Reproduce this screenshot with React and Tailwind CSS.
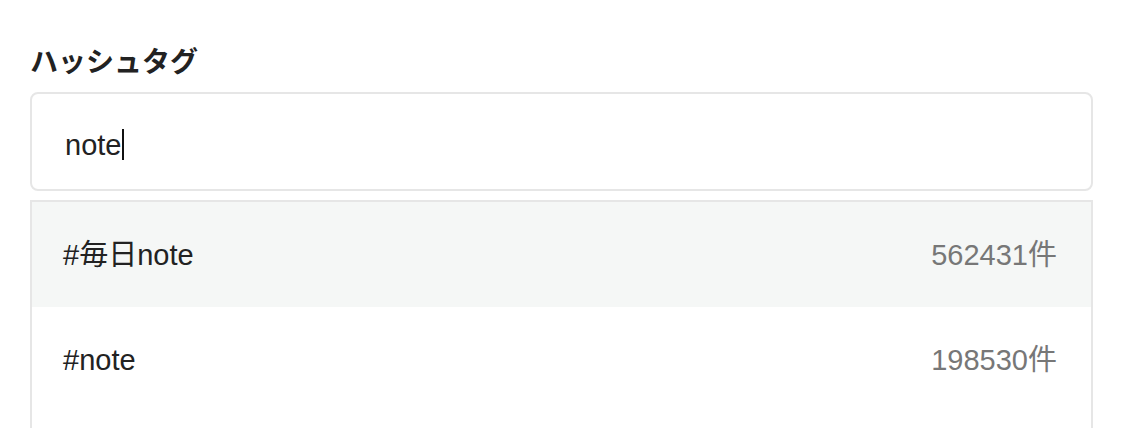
export default function App() {
  const tags = [
    { name: '#毎日note', count: '562431件', active: true },
    { name: '#note', count: '198530件', active: false },
  ];

  return (
    <div className="h-[428px] overflow-hidden bg-white pl-[30px] pt-[46px] font-['Liberation_Sans','Noto_Sans_CJK_JP',sans-serif]">
      <div className="w-[1063px]">
        <h2 className="text-[28px] leading-[34px] font-bold text-[#222]">ハッシュタグ</h2>
        <div className="mt-[12px] flex h-[99px] items-center rounded-[8px] border-2 border-[#e6e6e6] px-[33px] pt-[6px]">
          <span className="text-[29px] leading-[32px] text-[#222]">note</span>
          <span className="ml-px h-[31px] w-[2px] bg-[#111]" />
        </div>
        <ul className="mt-[9px] min-h-[260px] border-x-2 border-t-2 border-[#e6e6e6]">
          {tags.map((t) => (
            <li
              key={t.name}
              className={`flex h-[105px] items-center justify-between pl-[31px] pr-[34px] pt-[3px] text-[29px] ${t.active ? 'bg-[#f5f7f6]' : 'bg-white'}`}
            >
              <span className="text-[#222]">{t.name}</span>
              <span className="text-[#777]">{t.count}</span>
            </li>
          ))}
        </ul>
      </div>
    </div>
  );
}
